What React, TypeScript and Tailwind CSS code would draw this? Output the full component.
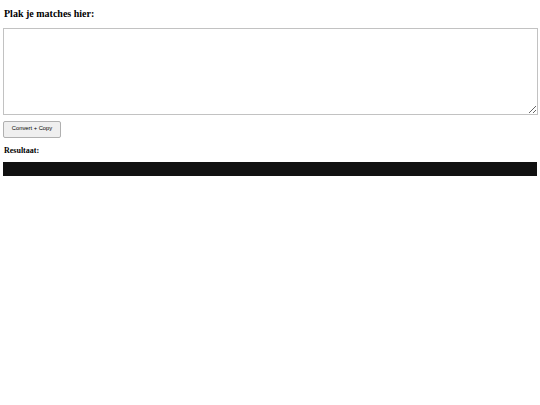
export default function App() {
  return (
    <div className="min-h-[405px] w-[540px] bg-white px-[3px] pt-[9px] font-['Liberation_Serif',serif] text-black">
      <h2 className="pl-px text-[10px] leading-[10px] font-bold">Plak je matches hier:</h2>
      <textarea className="mt-[9px] block h-[87px] w-[535px] resize border border-[#c2c2c2] bg-white p-1 text-[9px] outline-none" />
      <button
        type="button"
        className="mt-[6px] block h-[16.5px] w-[58px] rounded-[2px] border border-[#b0b0b0] bg-[#efefef] font-['Liberation_Sans',sans-serif] text-[5.8px] leading-none text-black"
      >
        Convert + Copy
      </button>
      <h3 className="mt-[9px] pl-px text-[8px] leading-[8px] font-bold">Resultaat:</h3>
      <pre className="mt-[7px] h-[14px] w-[534px] bg-[#111111]" />
    </div>
  );
}
